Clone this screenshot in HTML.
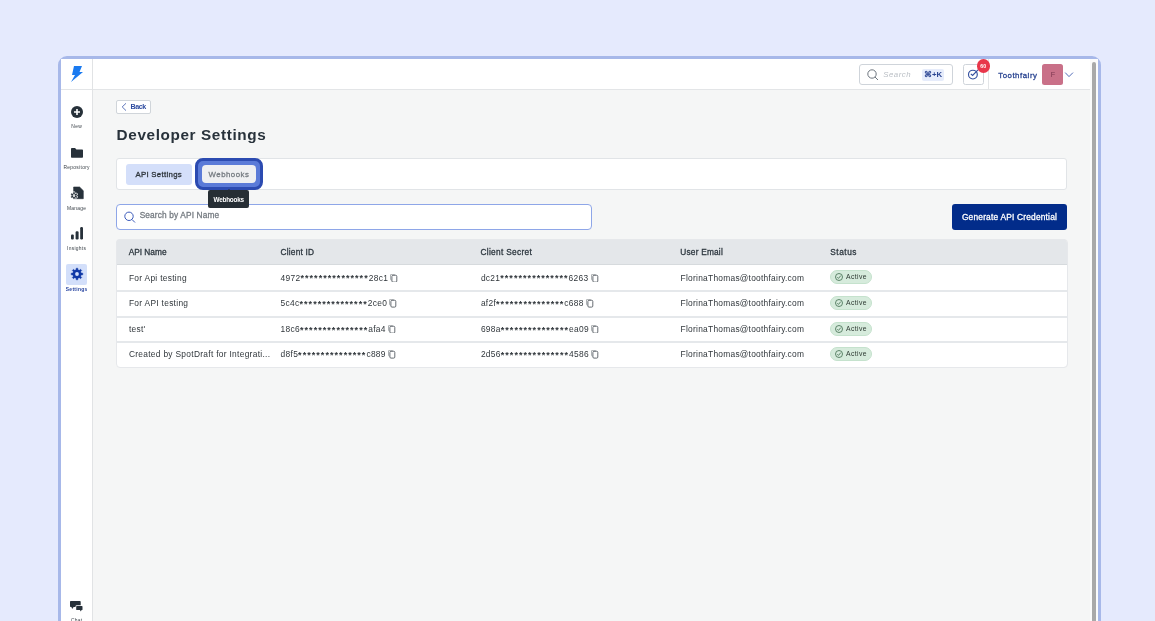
<!DOCTYPE html>
<html><head><meta charset="utf-8">
<style>
*{box-sizing:border-box;margin:0;padding:0}
html,body{width:1155px;height:621px;overflow:hidden;background:#e5eafd;font-family:"Liberation Sans",sans-serif}
.a{position:absolute;white-space:nowrap}
svg.a{overflow:visible}
body{will-change:transform}
</style></head><body>
<div class="a" style="left:58px;top:56px;width:1043px;height:620px;border:3px solid #a7b8e9;border-radius:9px;background:#f5f6f6"></div>
<div class="a" style="left:61px;top:59px;width:1037px;height:31px;background:#fff;border-bottom:1px solid #e3e5e7"></div>
<div class="a" style="left:61px;top:59px;width:32px;height:570px;background:#fff;border-right:1px solid #e1e3e5"></div>
<div class="a" style="left:61px;top:89px;width:31px;height:1px;background:#e3e5e7"></div>
<div class="a" style="left:1090px;top:59px;width:8px;height:570px;background:#fbfbfb"></div>
<div class="a" style="left:1092px;top:62px;width:4px;height:570px;background:#a9a9a9;border-radius:2px"></div>
<svg class="a" style="left:70px;top:65px" width="14" height="18" viewBox="0 0 14 18"><path d="M4 1 H12 L9.5 7 H13 L1 17 L5 10 H2 Z" fill="#1a7af0"/></svg>
<div class="a" style="left:859px;top:64px;width:94px;height:21px;border:1px solid #cfd4da;border-radius:3px;background:#fff"></div>
<svg class="a" style="left:867px;top:69px" width="12" height="12" viewBox="0 0 12 12"><circle cx="5" cy="5" r="4.2" fill="none" stroke="#5d6670" stroke-width="0.9"/><path d="M8 8 L11 11" stroke="#5d6670" stroke-width="0.9"/></svg>
<div class="a" style="left:883.30px;top:71.40px;font-size:7.8px;line-height:7.8px;color:#b9bec4;font-weight:normal;letter-spacing:0.5px;font-style:italic;">Search</div>
<div class="a" style="left:922px;top:69px;width:22px;height:12px;background:#e6ecfb;border-radius:2px"></div>
<div class="a" style="left:924.00px;top:70.70px;font-size:7.8px;line-height:7.8px;color:#2b4592;font-weight:bold;letter-spacing:0px;font-style:normal;">&#8984;+K</div>
<div class="a" style="left:963px;top:64px;width:21px;height:21px;border:1px solid #cfd4da;border-radius:2.5px;background:#fff"></div>
<div class="a" style="left:988px;top:59px;width:1px;height:30px;background:#e3e5e7"></div>
<svg class="a" style="left:962px;top:64px" width="20" height="20" viewBox="0 0 20 20"><circle cx="10.9" cy="10.6" r="4.4" fill="none" stroke="#34509f" stroke-width="1.15"/><path d="M8.8 9.8 L10.6 11.5 L16 5.8" fill="none" stroke="#34509f" stroke-width="1.15"/></svg>
<div class="a" style="left:976.6px;top:59px;width:13.8px;height:13.8px;border-radius:7px;background:#e8364a"></div>
<div class="a" style="left:980.30px;top:63.80px;font-size:5.2px;line-height:5.2px;color:#fff;font-weight:bold;letter-spacing:0.1px;font-style:normal;">60</div>
<div class="a" style="left:998.20px;top:71.90px;font-size:7.8px;line-height:7.8px;color:#2a4592;font-weight:normal;letter-spacing:0.55px;font-style:normal;-webkit-text-stroke:0.3px #2a4592;">Toothfairy</div>
<div class="a" style="left:1042px;top:64.3px;width:21px;height:20.3px;border-radius:2.5px;background:#c97088"></div>
<div class="a" style="left:1050.80px;top:70.81px;font-size:7.2px;line-height:7.2px;color:#7b3650;font-weight:normal;letter-spacing:0px;font-style:normal;">F</div>
<svg class="a" style="left:1064px;top:71px" width="10" height="7" viewBox="0 0 10 7"><path d="M1.2 1.6 L5 5.6 L9 1.6" fill="none" stroke="#3f5bb0" stroke-width="0.9"/></svg>
<svg class="a" style="left:71px;top:106px" width="12" height="12" viewBox="0 0 12 12"><circle cx="6" cy="6" r="6" fill="#27313a"/><path d="M6 3 V9 M3 6 H9" stroke="#fff" stroke-width="1.6"/></svg>
<svg class="a" style="left:71px;top:147.8px" width="12" height="10" viewBox="0 0 12 10"><path d="M0 0.9 Q0 0.1 0.8 0.1 H3.8 Q4.3 0.1 4.6 0.5 L5.4 1.4 H11.2 Q12 1.4 12 2.2 V9 Q12 9.7 11.2 9.7 H0.8 Q0 9.7 0 9 Z" fill="#27313a"/></svg>
<svg class="a" style="left:70px;top:186px" width="14" height="14" viewBox="0 0 14 14"><path d="M3.6 1 H9.6 L13.3 4.7 V12.7 H3.6 Z" fill="#27313a" stroke="#27313a" stroke-width="0.6" stroke-linejoin="round"/><g transform="translate(0.5,6.1)"><path d="M2.95 0.25 L4.05 0.25 L4.12 1.28 L5.11 1.86 L6.04 1.40 L6.59 2.35 L5.73 2.93 L5.73 4.07 L6.59 4.65 L6.04 5.60 L5.11 5.14 L4.12 5.72 L4.05 6.75 L2.95 6.75 L2.88 5.72 L1.89 5.14 L0.96 5.60 L0.41 4.65 L1.27 4.07 L1.27 2.93 L0.41 2.35 L0.96 1.40 L1.89 1.86 L2.88 1.28 Z" fill="#fff" stroke="#fff" stroke-width="1.6" stroke-linejoin="round"/><path d="M2.95 0.25 L4.05 0.25 L4.12 1.28 L5.11 1.86 L6.04 1.40 L6.59 2.35 L5.73 2.93 L5.73 4.07 L6.59 4.65 L6.04 5.60 L5.11 5.14 L4.12 5.72 L4.05 6.75 L2.95 6.75 L2.88 5.72 L1.89 5.14 L0.96 5.60 L0.41 4.65 L1.27 4.07 L1.27 2.93 L0.41 2.35 L0.96 1.40 L1.89 1.86 L2.88 1.28 Z" fill="#27313a" stroke="#27313a" stroke-width="0.3" stroke-linejoin="round"/><circle cx="3.5" cy="3.5" r="1.3" fill="#fff"/><circle cx="3.5" cy="3.5" r="0.45" fill="#27313a"/></g></svg>
<svg class="a" style="left:71px;top:227.3px" width="12" height="12.4" viewBox="0 0 12 12.4"><rect x="0" y="7.5" width="2.8" height="4.9" rx="1" fill="#27313a"/><rect x="4.6" y="4.3" width="3" height="8.1" rx="1.2" fill="#27313a"/><rect x="9.2" y="0" width="2.8" height="12.4" rx="1.2" fill="#27313a"/></svg>
<div class="a" style="left:66px;top:264px;width:21px;height:20.7px;background:#d3dffa;border-radius:2px"></div>
<svg class="a" style="left:70.9px;top:268.4px" width="12" height="12" viewBox="0 0 12 12"><path d="M5.15 0.16 L6.85 0.16 L6.95 1.81 L8.29 2.36 L9.52 1.27 L10.73 2.48 L9.64 3.71 L10.19 5.05 L11.84 5.15 L11.84 6.85 L10.19 6.95 L9.64 8.29 L10.73 9.52 L9.52 10.73 L8.29 9.64 L6.95 10.19 L6.85 11.84 L5.15 11.84 L5.05 10.19 L3.71 9.64 L2.48 10.73 L1.27 9.52 L2.36 8.29 L1.81 6.95 L0.16 6.85 L0.16 5.15 L1.81 5.05 L2.36 3.71 L1.27 2.48 L2.48 1.27 L3.71 2.36 L5.05 1.81 Z" fill="#0f37a6" stroke="#0f37a6" stroke-width="0.4" stroke-linejoin="round"/><circle cx="6" cy="6" r="1.9" fill="#d3dffa"/></svg>
<svg class="a" style="left:70px;top:600.8px" width="13" height="11" viewBox="0 0 13 11"><path d="M0.8 0 H9.9 Q10.7 0 10.7 0.8 V5.3 Q10.7 6.1 9.9 6.1 H3.6 L2.2 8.1 L1.4 6.1 H0.8 Q0 6.1 0 5.3 V0.8 Q0 0 0.8 0 Z" fill="#27313a"/><path d="M6.9 4.9 H11.8 Q12.5 4.9 12.5 5.6 V8.4 Q12.5 9.1 11.8 9.1 H11.5 L10.9 10.4 L9.9 9.1 H6.9 Q6.2 9.1 6.2 8.4 V5.6 Q6.2 4.9 6.9 4.9 Z" fill="#fff" stroke="#fff" stroke-width="1.4"/><path d="M6.9 4.9 H11.8 Q12.5 4.9 12.5 5.6 V8.4 Q12.5 9.1 11.8 9.1 H11.5 L10.9 10.6 L9.9 9.1 H6.9 Q6.2 9.1 6.2 8.4 V5.6 Q6.2 4.9 6.9 4.9 Z" fill="#27313a"/></svg>
<div class="a" style="left:61px;width:31px;top:123.5px;text-align:center;font-size:4.9px;line-height:5px;letter-spacing:0.3px;text-indent:0.3px;color:#3b4249;font-weight:normal">New</div>
<div class="a" style="left:61px;width:31px;top:164.5px;text-align:center;font-size:4.9px;line-height:5px;letter-spacing:0.3px;text-indent:0.3px;color:#3b4249;font-weight:normal">Repository</div>
<div class="a" style="left:61px;width:31px;top:205.5px;text-align:center;font-size:4.9px;line-height:5px;letter-spacing:0.3px;text-indent:0.3px;color:#3b4249;font-weight:normal">Manage</div>
<div class="a" style="left:61px;width:31px;top:245.5px;text-align:center;font-size:4.9px;line-height:5px;letter-spacing:0.3px;text-indent:0.3px;color:#3b4249;font-weight:normal">Insights</div>
<div class="a" style="left:61px;width:31px;top:286.5px;text-align:center;font-size:4.9px;line-height:5px;letter-spacing:0.3px;text-indent:0.3px;color:#1f3d9c;font-weight:bold">Settings</div>
<div class="a" style="left:61px;width:31px;top:618.0px;text-align:center;font-size:4.9px;line-height:5px;letter-spacing:0.3px;text-indent:0.3px;color:#3b4249;font-weight:normal">Chat</div>
<div class="a" style="left:116px;top:100px;width:35px;height:14px;background:#fff;border:1px solid #d0d5da;border-radius:2px"></div>
<svg class="a" style="left:121px;top:103px" width="6" height="8" viewBox="0 0 6 8"><path d="M5 0.3 L1.2 3.9 L5 7.6" fill="none" stroke="#3552a8" stroke-width="0.8"/></svg>
<div class="a" style="left:130.50px;top:104.19px;font-size:7.1px;line-height:7.1px;color:#2d4ba0;font-weight:bold;letter-spacing:-0.4px;font-style:normal;">Back</div>
<div class="a" style="left:116.60px;top:127.25px;font-size:15.3px;line-height:15.3px;color:#28323b;font-weight:bold;letter-spacing:0.62px;font-style:normal;">Developer Settings</div>
<div class="a" style="left:116px;top:158px;width:951px;height:32px;background:#fff;border:1px solid #e1e4e7;border-radius:3px"></div>
<div class="a" style="left:126px;top:164px;width:66px;height:21px;background:#d4dffa;border-radius:3px"></div>
<div class="a" style="left:135.40px;top:170.50px;font-size:7.8px;line-height:7.8px;color:#2f363d;font-weight:normal;letter-spacing:0.31px;font-style:normal;-webkit-text-stroke:0.3px #2f363d;">API Settings</div>
<div class="a" style="left:195px;top:157.5px;width:68px;height:32px;border:3px solid #2c4bb1;border-radius:8px;background:#5b7bd8"></div>
<div class="a" style="left:202px;top:164.8px;width:54px;height:17.8px;background:#eff0f2;border-radius:4px"></div>
<div class="a" style="left:208.60px;top:171.20px;font-size:7.8px;line-height:7.8px;color:#767c82;font-weight:normal;letter-spacing:0.5px;font-style:normal;-webkit-text-stroke:0.3px #767c82;">Webhooks</div>
<div class="a" style="left:116px;top:204px;width:476px;height:25.5px;background:#fff;border:1px solid #8ea6e8;border-radius:4px"></div>
<svg class="a" style="left:124px;top:211.5px" width="12" height="12" viewBox="0 0 12 12"><circle cx="5" cy="4.3" r="4.2" fill="none" stroke="#3b5aba" stroke-width="1"/><path d="M8 7.5 L11 10.5" stroke="#3b5aba" stroke-width="1"/></svg>
<div class="a" style="left:139.70px;top:210.57px;font-size:8.3px;line-height:8.3px;color:#767c82;font-weight:normal;letter-spacing:0.14px;font-style:normal;-webkit-text-stroke:0.3px #767c82;">Search by API Name</div>
<div class="a" style="left:952px;top:204px;width:115px;height:25.5px;background:#022c8a;border-radius:3px"></div>
<div class="a" style="left:961.90px;top:213.19px;font-size:8.4px;line-height:8.4px;color:#fff;font-weight:normal;letter-spacing:0.19px;font-style:normal;-webkit-text-stroke:0.3px #fff;">Generate API Credential</div>
<div class="a" style="left:116px;top:239px;width:951px;height:128px;background:#fff;border-radius:4px"></div>
<div class="a" style="left:116px;top:239px;width:951px;height:26px;background:#e4e7ea;border-radius:4px 4px 0 0;border-bottom:1px solid #d6dadd"></div>
<div class="a" style="left:128.70px;top:247.87px;font-size:8.3px;line-height:8.3px;color:#2e3840;font-weight:normal;letter-spacing:0px;font-style:normal;-webkit-text-stroke:0.3px #2e3840;">API Name</div>
<div class="a" style="left:280.60px;top:247.87px;font-size:8.3px;line-height:8.3px;color:#2e3840;font-weight:normal;letter-spacing:0.2px;font-style:normal;-webkit-text-stroke:0.3px #2e3840;">Client ID</div>
<div class="a" style="left:480.40px;top:247.87px;font-size:8.3px;line-height:8.3px;color:#2e3840;font-weight:normal;letter-spacing:0.33px;font-style:normal;-webkit-text-stroke:0.3px #2e3840;">Client Secret</div>
<div class="a" style="left:680.30px;top:247.87px;font-size:8.3px;line-height:8.3px;color:#2e3840;font-weight:normal;letter-spacing:0.21px;font-style:normal;-webkit-text-stroke:0.3px #2e3840;">User Email</div>
<div class="a" style="left:830.20px;top:247.87px;font-size:8.3px;line-height:8.3px;color:#2e3840;font-weight:normal;letter-spacing:0.55px;font-style:normal;-webkit-text-stroke:0.3px #2e3840;">Status</div>
<div class="a" style="left:128.90px;top:273.59px;font-size:8.4px;line-height:8.4px;color:#30363b;font-weight:normal;letter-spacing:0.3px;font-style:normal;">For Api testing</div>
<div class="a" style="left:280.60px;top:273.59px;font-size:8.4px;line-height:8.4px;color:#30363b;font-weight:normal;letter-spacing:0.3px;font-style:normal;">4972<span style="letter-spacing:1.05px;font-weight:bold;font-size:9px;position:relative;top:0.6px">***************</span>28c1<svg style="display:inline-block;vertical-align:-1.2px;margin-left:2.3px;letter-spacing:0" width="8" height="8.5" viewBox="0 0 8 8.5"><path d="M4.8 1 V0.9 Q4.8 0.4 4.3 0.4 H1 Q0.5 0.4 0.5 0.9 V5.5 Q0.5 6 1 6 H1.6" fill="none" stroke="#a5a9ad" stroke-width="0.9"/><rect x="1.9" y="1.3" width="4.9" height="6.8" rx="1.1" fill="#fff" stroke="#5f656b" stroke-width="0.95"/></svg></div>
<div class="a" style="left:480.90px;top:273.59px;font-size:8.4px;line-height:8.4px;color:#30363b;font-weight:normal;letter-spacing:0.3px;font-style:normal;">dc21<span style="letter-spacing:1.05px;font-weight:bold;font-size:9px;position:relative;top:0.6px">***************</span>6263<svg style="display:inline-block;vertical-align:-1.2px;margin-left:2.3px;letter-spacing:0" width="8" height="8.5" viewBox="0 0 8 8.5"><path d="M4.8 1 V0.9 Q4.8 0.4 4.3 0.4 H1 Q0.5 0.4 0.5 0.9 V5.5 Q0.5 6 1 6 H1.6" fill="none" stroke="#a5a9ad" stroke-width="0.9"/><rect x="1.9" y="1.3" width="4.9" height="6.8" rx="1.1" fill="#fff" stroke="#5f656b" stroke-width="0.95"/></svg></div>
<div class="a" style="left:680.60px;top:273.59px;font-size:8.4px;line-height:8.4px;color:#30363b;font-weight:normal;letter-spacing:0.26px;font-style:normal;">FlorinaThomas@toothfairy.com</div>
<div class="a" style="left:830px;top:270px;width:42px;height:14px;border-radius:7px;background:#d6ebdc;border:1px solid #c5e2cd"></div>
<svg class="a" style="left:835.2px;top:273px" width="8" height="8" viewBox="0 0 8 8"><circle cx="4" cy="4" r="3.5" fill="none" stroke="#3d6a4b" stroke-width="0.8"/><path d="M2.3 4.2 L3.5 5.4 L5.8 2.6" fill="none" stroke="#3d6a4b" stroke-width="0.8"/></svg>
<div class="a" style="left:846.00px;top:274.44px;font-size:6.8px;line-height:6.8px;color:#2e3a33;font-weight:normal;letter-spacing:0.4px;font-style:normal;">Active</div>
<div class="a" style="left:116px;top:290px;width:951px;height:1.6px;background:#e5e8eb"></div>
<div class="a" style="left:128.90px;top:299.14px;font-size:8.4px;line-height:8.4px;color:#30363b;font-weight:normal;letter-spacing:0.3px;font-style:normal;">For API testing</div>
<div class="a" style="left:280.60px;top:299.14px;font-size:8.4px;line-height:8.4px;color:#30363b;font-weight:normal;letter-spacing:0.3px;font-style:normal;">5c4c<span style="letter-spacing:1.05px;font-weight:bold;font-size:9px;position:relative;top:0.6px">***************</span>2ce0<svg style="display:inline-block;vertical-align:-1.2px;margin-left:2.3px;letter-spacing:0" width="8" height="8.5" viewBox="0 0 8 8.5"><path d="M4.8 1 V0.9 Q4.8 0.4 4.3 0.4 H1 Q0.5 0.4 0.5 0.9 V5.5 Q0.5 6 1 6 H1.6" fill="none" stroke="#a5a9ad" stroke-width="0.9"/><rect x="1.9" y="1.3" width="4.9" height="6.8" rx="1.1" fill="#fff" stroke="#5f656b" stroke-width="0.95"/></svg></div>
<div class="a" style="left:480.90px;top:299.14px;font-size:8.4px;line-height:8.4px;color:#30363b;font-weight:normal;letter-spacing:0.3px;font-style:normal;">af2f<span style="letter-spacing:1.05px;font-weight:bold;font-size:9px;position:relative;top:0.6px">***************</span>c688<svg style="display:inline-block;vertical-align:-1.2px;margin-left:2.3px;letter-spacing:0" width="8" height="8.5" viewBox="0 0 8 8.5"><path d="M4.8 1 V0.9 Q4.8 0.4 4.3 0.4 H1 Q0.5 0.4 0.5 0.9 V5.5 Q0.5 6 1 6 H1.6" fill="none" stroke="#a5a9ad" stroke-width="0.9"/><rect x="1.9" y="1.3" width="4.9" height="6.8" rx="1.1" fill="#fff" stroke="#5f656b" stroke-width="0.95"/></svg></div>
<div class="a" style="left:680.60px;top:299.14px;font-size:8.4px;line-height:8.4px;color:#30363b;font-weight:normal;letter-spacing:0.26px;font-style:normal;">FlorinaThomas@toothfairy.com</div>
<div class="a" style="left:830px;top:296px;width:42px;height:14px;border-radius:7px;background:#d6ebdc;border:1px solid #c5e2cd"></div>
<svg class="a" style="left:835.2px;top:299px" width="8" height="8" viewBox="0 0 8 8"><circle cx="4" cy="4" r="3.5" fill="none" stroke="#3d6a4b" stroke-width="0.8"/><path d="M2.3 4.2 L3.5 5.4 L5.8 2.6" fill="none" stroke="#3d6a4b" stroke-width="0.8"/></svg>
<div class="a" style="left:846.00px;top:299.99px;font-size:6.8px;line-height:6.8px;color:#2e3a33;font-weight:normal;letter-spacing:0.4px;font-style:normal;">Active</div>
<div class="a" style="left:116px;top:316px;width:951px;height:1.6px;background:#e5e8eb"></div>
<div class="a" style="left:128.90px;top:324.69px;font-size:8.4px;line-height:8.4px;color:#30363b;font-weight:normal;letter-spacing:0.3px;font-style:normal;">test'</div>
<div class="a" style="left:280.60px;top:324.69px;font-size:8.4px;line-height:8.4px;color:#30363b;font-weight:normal;letter-spacing:0.3px;font-style:normal;">18c6<span style="letter-spacing:1.05px;font-weight:bold;font-size:9px;position:relative;top:0.6px">***************</span>afa4<svg style="display:inline-block;vertical-align:-1.2px;margin-left:2.3px;letter-spacing:0" width="8" height="8.5" viewBox="0 0 8 8.5"><path d="M4.8 1 V0.9 Q4.8 0.4 4.3 0.4 H1 Q0.5 0.4 0.5 0.9 V5.5 Q0.5 6 1 6 H1.6" fill="none" stroke="#a5a9ad" stroke-width="0.9"/><rect x="1.9" y="1.3" width="4.9" height="6.8" rx="1.1" fill="#fff" stroke="#5f656b" stroke-width="0.95"/></svg></div>
<div class="a" style="left:480.90px;top:324.69px;font-size:8.4px;line-height:8.4px;color:#30363b;font-weight:normal;letter-spacing:0.3px;font-style:normal;">698a<span style="letter-spacing:1.05px;font-weight:bold;font-size:9px;position:relative;top:0.6px">***************</span>ea09<svg style="display:inline-block;vertical-align:-1.2px;margin-left:2.3px;letter-spacing:0" width="8" height="8.5" viewBox="0 0 8 8.5"><path d="M4.8 1 V0.9 Q4.8 0.4 4.3 0.4 H1 Q0.5 0.4 0.5 0.9 V5.5 Q0.5 6 1 6 H1.6" fill="none" stroke="#a5a9ad" stroke-width="0.9"/><rect x="1.9" y="1.3" width="4.9" height="6.8" rx="1.1" fill="#fff" stroke="#5f656b" stroke-width="0.95"/></svg></div>
<div class="a" style="left:680.60px;top:324.69px;font-size:8.4px;line-height:8.4px;color:#30363b;font-weight:normal;letter-spacing:0.26px;font-style:normal;">FlorinaThomas@toothfairy.com</div>
<div class="a" style="left:830px;top:322px;width:42px;height:14px;border-radius:7px;background:#d6ebdc;border:1px solid #c5e2cd"></div>
<svg class="a" style="left:835.2px;top:325px" width="8" height="8" viewBox="0 0 8 8"><circle cx="4" cy="4" r="3.5" fill="none" stroke="#3d6a4b" stroke-width="0.8"/><path d="M2.3 4.2 L3.5 5.4 L5.8 2.6" fill="none" stroke="#3d6a4b" stroke-width="0.8"/></svg>
<div class="a" style="left:846.00px;top:325.54px;font-size:6.8px;line-height:6.8px;color:#2e3a33;font-weight:normal;letter-spacing:0.4px;font-style:normal;">Active</div>
<div class="a" style="left:116px;top:341px;width:951px;height:1.6px;background:#e5e8eb"></div>
<div class="a" style="left:128.90px;top:350.24px;font-size:8.4px;line-height:8.4px;color:#30363b;font-weight:normal;letter-spacing:0.3px;font-style:normal;">Created by SpotDraft for Integrati...</div>
<div class="a" style="left:280.60px;top:350.24px;font-size:8.4px;line-height:8.4px;color:#30363b;font-weight:normal;letter-spacing:0.3px;font-style:normal;">d8f5<span style="letter-spacing:1.05px;font-weight:bold;font-size:9px;position:relative;top:0.6px">***************</span>c889<svg style="display:inline-block;vertical-align:-1.2px;margin-left:2.3px;letter-spacing:0" width="8" height="8.5" viewBox="0 0 8 8.5"><path d="M4.8 1 V0.9 Q4.8 0.4 4.3 0.4 H1 Q0.5 0.4 0.5 0.9 V5.5 Q0.5 6 1 6 H1.6" fill="none" stroke="#a5a9ad" stroke-width="0.9"/><rect x="1.9" y="1.3" width="4.9" height="6.8" rx="1.1" fill="#fff" stroke="#5f656b" stroke-width="0.95"/></svg></div>
<div class="a" style="left:480.90px;top:350.24px;font-size:8.4px;line-height:8.4px;color:#30363b;font-weight:normal;letter-spacing:0.3px;font-style:normal;">2d56<span style="letter-spacing:1.05px;font-weight:bold;font-size:9px;position:relative;top:0.6px">***************</span>4586<svg style="display:inline-block;vertical-align:-1.2px;margin-left:2.3px;letter-spacing:0" width="8" height="8.5" viewBox="0 0 8 8.5"><path d="M4.8 1 V0.9 Q4.8 0.4 4.3 0.4 H1 Q0.5 0.4 0.5 0.9 V5.5 Q0.5 6 1 6 H1.6" fill="none" stroke="#a5a9ad" stroke-width="0.9"/><rect x="1.9" y="1.3" width="4.9" height="6.8" rx="1.1" fill="#fff" stroke="#5f656b" stroke-width="0.95"/></svg></div>
<div class="a" style="left:680.60px;top:350.24px;font-size:8.4px;line-height:8.4px;color:#30363b;font-weight:normal;letter-spacing:0.26px;font-style:normal;">FlorinaThomas@toothfairy.com</div>
<div class="a" style="left:830px;top:347px;width:42px;height:14px;border-radius:7px;background:#d6ebdc;border:1px solid #c5e2cd"></div>
<svg class="a" style="left:835.2px;top:350px" width="8" height="8" viewBox="0 0 8 8"><circle cx="4" cy="4" r="3.5" fill="none" stroke="#3d6a4b" stroke-width="0.8"/><path d="M2.3 4.2 L3.5 5.4 L5.8 2.6" fill="none" stroke="#3d6a4b" stroke-width="0.8"/></svg>
<div class="a" style="left:846.00px;top:351.09px;font-size:6.8px;line-height:6.8px;color:#2e3a33;font-weight:normal;letter-spacing:0.4px;font-style:normal;">Active</div>
<div class="a" style="left:115.5px;top:238.5px;width:952px;height:129px;border:1px solid #e6e8eb;border-radius:4px"></div>
<div class="a" style="left:208.3px;top:190px;width:40.3px;height:18px;background:#262e34;border-radius:2px"></div>
<div class="a" style="left:226.5px;top:188.5px;width:0;height:0;border-left:2px solid transparent;border-right:2px solid transparent;border-bottom:2px solid #262e34"></div>
<div class="a" style="left:213.60px;top:196.98px;font-size:6.4px;line-height:6.4px;color:#fff;font-weight:bold;letter-spacing:-0.25px;font-style:normal;">Webhooks</div>
</body></html>
